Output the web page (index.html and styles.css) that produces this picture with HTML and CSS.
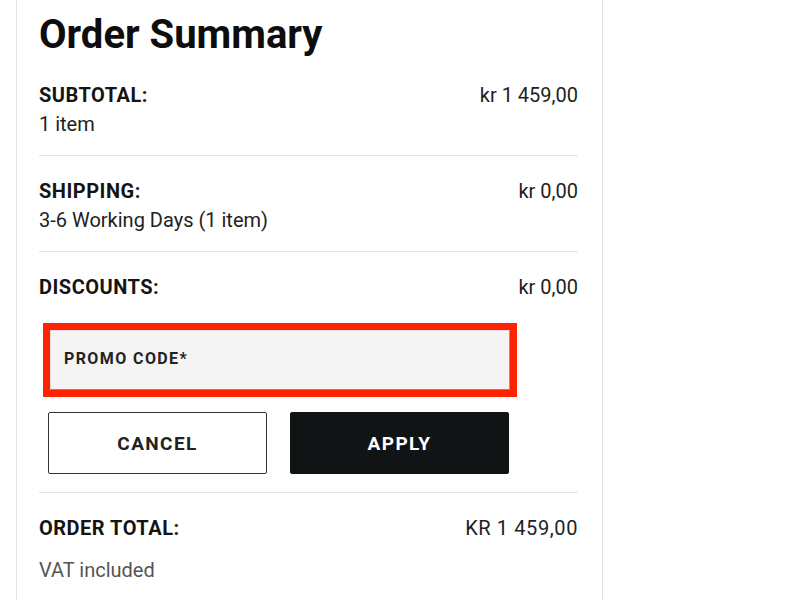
FILE: index.html
```html
<!DOCTYPE html>
<html>
<head>
<meta charset="utf-8">
<link rel="stylesheet" href="styles.css">
</head>
<body>
<div class="card">
  <h1 class="title">Order Summary</h1>
  <div class="section first">
    <div class="row">
      <span class="label">SUBTOTAL:</span>
      <span class="value">kr 1 459,00</span>
    </div>
    <div class="sub">1 item</div>
  </div>
  <div class="section">
    <div class="row">
      <span class="label">SHIPPING:</span>
      <span class="value">kr 0,00</span>
    </div>
    <div class="sub">3-6 Working Days (1 item)</div>
  </div>
  <div class="section discounts">
    <div class="row">
      <span class="label">DISCOUNTS:</span>
      <span class="value">kr 0,00</span>
    </div>
    <div class="promo">
      <div class="promo-outline">
        <div class="promo-input">PROMO CODE*</div>
      </div>
      <div class="buttons">
        <button class="btn btn-cancel">CANCEL</button>
        <button class="btn btn-apply">APPLY</button>
      </div>
    </div>
  </div>
  <div class="section total">
    <div class="row">
      <span class="label">ORDER TOTAL:</span>
      <span class="value total-value">KR 1 459,00</span>
    </div>
    <div class="sub vat">VAT included</div>
  </div>
</div>
</body>
</html>
```
FILE: styles.css
```css
html, body {
  margin: 0;
  padding: 0;
  background: #fff;
}
body {
  font-family: Roboto, "Liberation Sans", sans-serif;
  color: #111;
}
.card {
  margin-left: 16px;
  width: 539px;
  padding: 0 24px 0 22px;
  border-left: 1px solid #e3e3e3;
  border-right: 1px solid #e3e3e3;
  height: 600px;
}
.title {
  margin: 0;
  padding-top: 11px;
  font-size: 40px;
  line-height: 48px;
  font-weight: 700;
  color: #0d0d0d;
}
.section {
  border-bottom: 1px solid #e3e3e3;
  padding: 23px 0 19px;
}
.section.first {
  padding-top: 24px;
}
.row {
  display: flex;
  justify-content: space-between;
  align-items: baseline;
  height: 24px;
}
.label {
  font-size: 20px;
  font-weight: 700;
  letter-spacing: 0.5px;
  line-height: 24px;
  color: #141414;
}
.value {
  font-size: 20px;
  line-height: 24px;
  color: #222;
}
.total-value {
  letter-spacing: 0.6px;
}
.sub {
  margin-top: 5px;
  font-size: 20px;
  line-height: 24px;
  color: #222;
}
.discounts {
  padding-bottom: 18px;
}
.promo {
  margin-left: 4px;
  width: 474px;
}
.promo-outline {
  margin-top: 24px;
  border: 7px solid #ff2200;
}
.promo-input {
  background: #f4f4f4;
  border-top: 1px solid #ddd;
  border-left: 1px solid #ddd;
  border-right: 1px solid #999;
  border-bottom: 1px solid #888;
  height: 54px;
  padding: 0 0 4px 13px;
  display: flex;
  align-items: center;
  font-size: 16px;
  font-weight: 700;
  letter-spacing: 1.4px;
  color: #222;
}
.buttons {
  display: flex;
  gap: 23px;
  margin-top: 15px;
  padding: 0 8px 0 5px;
}
.btn {
  flex: 1;
  height: 62px;
  border-radius: 2px;
  font-family: Roboto, "Liberation Sans", sans-serif;
  font-size: 19px;
  font-weight: 700;
  letter-spacing: 1.4px;
}
.btn-cancel {
  background: #fff;
  border: 1px solid #333;
  color: #222;
}
.btn-apply {
  background: #111414;
  border: 1px solid #111414;
  color: #fff;
}
.total {
  border-bottom: none;
}
.vat {
  margin-top: 18px;
  color: #555;
}
```
